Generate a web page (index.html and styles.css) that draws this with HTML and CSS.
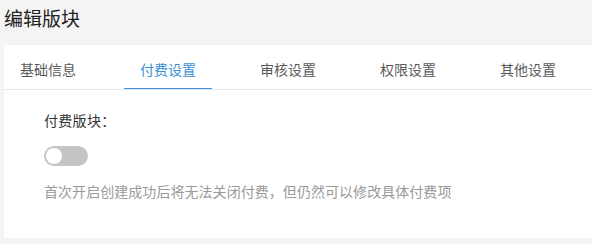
FILE: index.html
```html
<!DOCTYPE html>
<html lang="zh">
<head>
<meta charset="utf-8">
<link rel="stylesheet" href="styles.css">
</head>
<body>
<div class="page">
  <h1 class="title">编辑版块</h1>
  <div class="card">
    <div class="tabs">
      <div class="tab">基础信息</div>
      <div class="tab active">付费设置</div>
      <div class="tab">审核设置</div>
      <div class="tab">权限设置</div>
      <div class="tab">其他设置</div>
    </div>
    <div class="content">
      <div class="label">付费版块：</div>
      <div class="switch"><span class="knob"></span></div>
      <div class="hint">首次开启创建成功后将无法关闭付费，但仍然可以修改具体付费项</div>
    </div>
  </div>
</div>
</body>
</html>
```
FILE: styles.css
```css
html, body {
  margin: 0;
  padding: 0;
  background: #f4f4f4;
  font-family: "Noto Sans CJK SC", "Noto Sans", sans-serif;
  overflow: hidden;
}
.page {
  padding-left: 4px;
}
.title {
  margin: 0;
  height: 45px;
  font-size: 19px;
  font-weight: 400;
  line-height: 36px;
  color: #222;
}
.card {
  background: #fff;
  height: 193px;
}
.tabs {
  display: flex;
  border-bottom: 1px solid #e6e6e6;
  height: 44px;
  overflow: hidden;
}
.tab {
  flex: 0 0 88px;
  margin-right: 32px;
  box-sizing: border-box;
  text-align: center;
  font-size: 14px;
  line-height: 48px;
  color: #5a5a5a;
  height: 45px;
}
.tab.active {
  color: #3d8fd8;
  border-bottom: 2px solid #3a8ee0;
}
.content {
  padding: 20px 0 0 40px;
}
.label {
  font-size: 14px;
  line-height: 20px;
  color: #333;
  letter-spacing: 0.3px;
}
.switch {
  margin-top: 16px;
  width: 44px;
  height: 20px;
  border-radius: 10px;
  background: #c4c4c4;
  position: relative;
}
.knob {
  position: absolute;
  left: 2px;
  top: 2px;
  width: 16px;
  height: 16px;
  border-radius: 50%;
  background: #fff;
}
.hint {
  margin-top: 15px;
  font-size: 14px;
  line-height: 20px;
  color: #999;
  letter-spacing: 0.05px;
}
```
